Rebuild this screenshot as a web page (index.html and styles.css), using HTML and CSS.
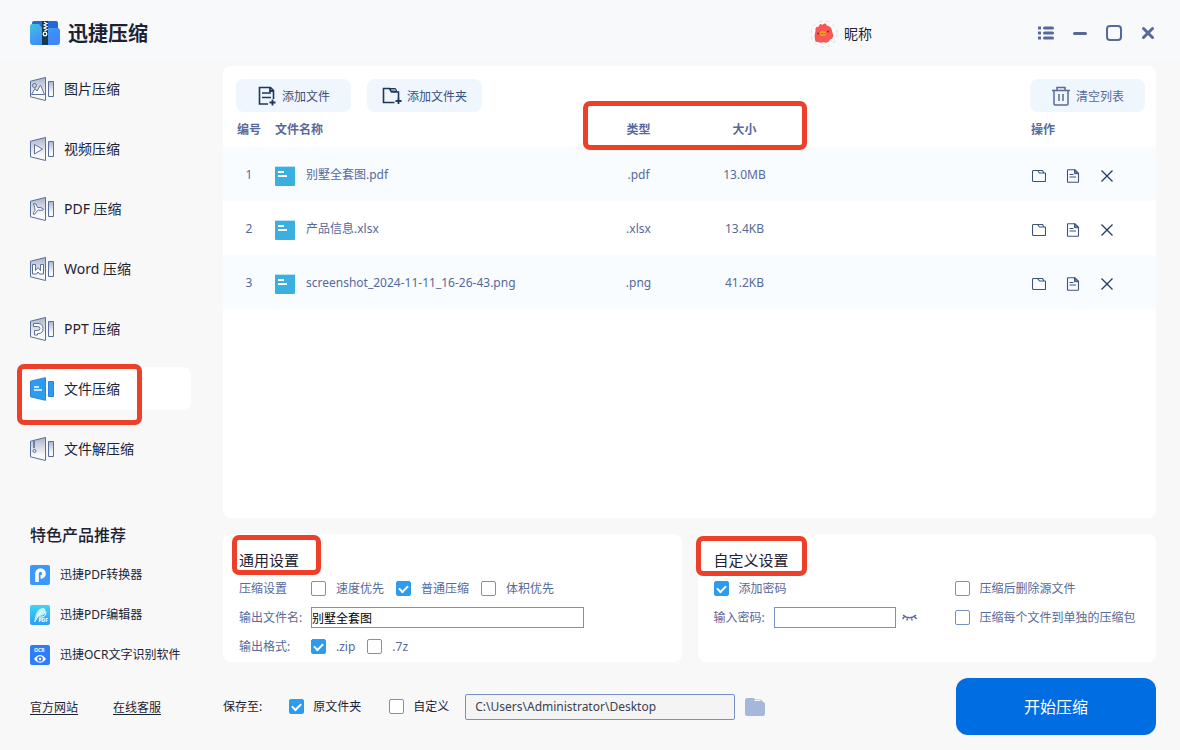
FILE: index.html
```html
<!DOCTYPE html>
<html lang="zh-CN">
<head>
<meta charset="utf-8">
<title>迅捷压缩</title>
<link rel="stylesheet" href="styles.css">
</head>
<body>
<svg class="defs" width="0" height="0" aria-hidden="true">
  <defs>
    <linearGradient id="shade" x1="0" y1="0" x2="0" y2="1"><stop offset="0" stop-color="#a9b4cb"/><stop offset="0.75" stop-color="#f8f8f8"/></linearGradient>
    <linearGradient id="folder" x1="0" y1="0" x2="1" y2="1"><stop offset="0" stop-color="#3fc3dc"/><stop offset="0.6" stop-color="#3f8df8"/><stop offset="1" stop-color="#4480ff"/></linearGradient>
    <linearGradient id="sky" x1="0" y1="0" x2="0" y2="1"><stop offset="0" stop-color="#3cd6f6"/><stop offset="1" stop-color="#2f9cf4"/></linearGradient>
    <symbol id="box" viewBox="0 0 24 24">
      <path d="M.5 4.2 15.5.5v23L.5 19.8z" fill="url(#shade)" stroke="#5a6f9e"/>
      <path d="M18.5 4.500h5v15h-5z" fill="url(#shade)" stroke="#5a6f9e"/>
    </symbol>
    <symbol id="i-open" viewBox="0 0 14 14"><path d="M1.500 1.500h4l2 2.500H13q.5 0 .5.500v7.500q0 .500-.500.500H1.500q-1 0-1-1v-9q0-1 1-1zM5.500 1.500h5l1.500 2.500" fill="none" stroke="#3f5279" stroke-width="1.100"/></symbol>
    <symbol id="i-doc" viewBox="0 0 14 14"><path d="M2 .7h7l3.500 3.500v8.600q0 .500-.500.500H2q-.500 0-.500-.500V1.200q0-.500.500-.500z" fill="none" stroke="#3f5279" stroke-width="1.100"/><path d="M8.500.7v4h4z" fill="#6d7c9b" stroke="#3f5279"/><path d="M3.500 5.500h4M3.500 8h6.500" stroke="#3f5279" stroke-width="1.100"/></symbol>
    <symbol id="i-x" viewBox="0 0 14 14"><path d="m1.500 1.500 11 11m0-11-11 11" fill="none" stroke="#243a63" stroke-width="1.300"/></symbol>
    <symbol id="i-file" viewBox="0 0 20 20"><rect width="20" height="20" rx="1" fill="#3aafe0"/><path d="M0 .5h20" stroke="#b9e2f4"/><path d="M3 6h6M3 10h9" stroke="#fff" stroke-width="2"/></symbol>
  </defs>
</svg>

<div class="app">
  <header class="titlebar">
    <svg class="logo" width="30" height="24" viewBox="0 0 30 24" aria-hidden="true">
      <path d="M2 2q0-2 2-2h22q2 0 2 2v10H2z" fill="#2368d8"/>
      <path d="M0 5q0-2 2-2h7l3 4h15q3 0 3 3v11q0 3-3 3H3q-3 0-3-3z" fill="url(#folder)"/>
      <path d="M12 0h6v24h-6z" fill="#173a48"/>
      <path d="m14 1 3 1.500-3 1.500 3 1.500-3 1.500 3 1.500-2.500 1.500" fill="none" stroke="#fff" stroke-width="1.200"/>
      <circle cx="15" cy="13" r="1.800" fill="none" stroke="#fff" stroke-width="1.300"/>
    </svg>
    <h1 class="brand">迅捷压缩</h1>
    <div class="user">
      <svg width="28" height="30" viewBox="0 0 28 30" aria-hidden="true">
        <circle cx="14" cy="15" r="12" fill="#fafafa"/>
        <circle cx="14" cy="15" r="13" fill="none" stroke="#dcdcdc" stroke-dasharray="3 4"/>
        <path d="M5.500 12q-.5-3 1-4 1-.5 2 0Q9 5.500 10.500 5q1 0 1.500 1 2-2 3.500-1.500 1 .500 1 2 4 .500 5 3.500l1 4q1.500 2 .5 4-1 2-3 2.500-1 3-3.500 3-1.500.500-2.500-.500-3 1.500-6 0-3 .500-3-2-1-4 .5-9z" fill="#fa5653"/>
        <ellipse cx="13" cy="14.500" rx="3.200" ry="2.800" fill="#f0982a"/>
        <path d="M10.500 14.500h5" stroke="#c97a1c"/>
        <circle cx="8" cy="14.500" r="1" fill="#7c2c38"/><circle cx="18" cy="12.500" r="1" fill="#7c2c38"/>
      </svg>
      <span>昵称</span>
    </div>
    <div class="window-controls">
      <button type="button" aria-label="菜单"><svg width="16" height="14" viewBox="0 0 16 14"><path d="M6.500 2h8M6.500 7h8M6.500 12h8" stroke="#57699a" stroke-width="3" stroke-linecap="round"/><path d="M0 .5h3v3H0zM0 5.500h3v3H0zM0 10.500h3v3H0z" fill="#57699a"/></svg></button>
      <button type="button" aria-label="最小化"><svg width="16" height="16" viewBox="0 0 16 16"><path d="M2.500 8.500h11" stroke="#57699a" stroke-width="3" stroke-linecap="round"/></svg></button>
      <button type="button" aria-label="最大化"><svg width="16" height="16" viewBox="0 0 16 16"><rect x="1" y="1" width="14" height="14" rx="3" fill="none" stroke="#57699a" stroke-width="2"/></svg></button>
      <button type="button" aria-label="关闭"><svg width="16" height="16" viewBox="0 0 16 16"><path d="m3.500 3.500 9 9m0-9-9 9" stroke="#57699a" stroke-width="3" stroke-linecap="round"/></svg></button>
    </div>
  </header>

  <aside class="sidebar">
    <nav class="nav">
      <a class="nav-item" href="#image"><svg width="24" height="24" aria-hidden="true"><use href="#box"/><circle cx="4.500" cy="8.500" r="2" fill="none" stroke="#5a6f9e"/><path d="M1.500 17.500 5 11.500l2 2.500 3.500-6 4 9.500z" fill="#fff" stroke="#5a6f9e"/></svg>图片压缩</a>
      <a class="nav-item" href="#video"><svg width="24" height="24" aria-hidden="true"><use href="#box"/><path d="m4.500 7.500 8 4.500-8 5z" fill="#fff" stroke="#5a6f9e"/></svg>视频压缩</a>
      <a class="nav-item" href="#pdf"><svg width="24" height="24" aria-hidden="true"><use href="#box"/><path d="M3.500 6.500q3-1 4 4 4-.5 6 1.500 0 2-5 1l-2 1.500q-1 3-3 3-1-2 1.500-4 0-3-1.500-7z" fill="#fff" stroke="#5a6f9e"/></svg>PDF 压缩</a>
      <a class="nav-item" href="#word"><svg width="24" height="24" aria-hidden="true"><use href="#box"/><path d="M2.500 7.500h3v6l2.500-3 2.500 3v-6h3v9.500h-4l-1.500-2-1.500 2h-4z" fill="#fff" stroke="#5a6f9e"/></svg>Word 压缩</a>
      <a class="nav-item" href="#ppt"><svg width="24" height="24" aria-hidden="true"><use href="#box"/><path d="M4.500 18V13.500h3q2.500 0 2.500-2t-2.500-2H3.500v-3H8q5 0 5 5t-4.500 5H7.500V18z" fill="#fff" stroke="#5a6f9e"/></svg>PPT 压缩</a>
      <a class="nav-item active marked" href="#file" aria-current="page"><svg width="24" height="24" aria-hidden="true"><path d="M.5 4.200 15.500.7v22.600L.5 19.800zM18.500 4.500h5v15h-5z" fill="#2d9bf0" stroke="#2a83dc"/><path d="M4 10h5M4 13h8" stroke="#fff" stroke-width="1.300"/></svg>文件压缩</a>
      <a class="nav-item" href="#unzip"><svg width="24" height="24" aria-hidden="true"><use href="#box"/><path d="m3 4 2 1-2 1 2 1-2 1 2 1-2 1 2 1" fill="none" stroke="#5a6f9e"/><circle cx="4.500" cy="14" r="1.500" fill="none" stroke="#5a6f9e"/></svg>文件解压缩</a>
    </nav>

    <section class="promo">
      <h2 class="promo-title">特色产品推荐</h2>
      <a class="promo-item" href="#p1"><svg width="20" height="20" viewBox="0 0 20 20" aria-hidden="true"><rect width="20" height="20" rx="2" fill="#3d98fb"/><path d="M7 17V8.500A3.500 3.500 0 1 1 10.500 12" fill="none" stroke="#fff" stroke-width="3.600"/></svg>迅捷PDF转换器</a>
      <a class="promo-item" href="#p2"><svg width="20" height="20" viewBox="0 0 20 20" aria-hidden="true"><rect width="20" height="20" rx="2" fill="url(#sky)"/><path d="M4 17 6 9q3-7 8-6 4 4-1 7L7 12z" fill="#c9f1fc"/><path d="m4.500 17 7-11M9 12h4q3-1 3-5" fill="none" stroke="#fff"/><text x="8.500" y="17" class="tiny">PDF</text></svg>迅捷PDF编辑器</a>
      <a class="promo-item" href="#p3"><svg width="20" height="20" viewBox="0 0 20 20" aria-hidden="true"><rect width="20" height="20" rx="2" fill="#2f7df6"/><text x="4" y="7" class="tiny">OCR</text><path d="M4 14q6-8 12 0-6 7.500-12 0z" fill="#fff"/><circle cx="10" cy="14" r="2.800" fill="#2f7df6"/><circle cx="10" cy="14" r="1.200" fill="#fff"/></svg>迅捷OCR文字识别软件</a>
    </section>
    <div class="links"><a href="#site">官方网站</a><a href="#service">在线客服</a></div>
  </aside>

  <main class="main">
    <section class="panel files">
      <div class="toolbar">
        <button type="button" class="tool"><svg width="20" height="20" viewBox="0 0 20 20" aria-hidden="true"><path d="M11 18H2.500V1.500h11l3 3V13M5 7h9M5 11.500h9" fill="none" stroke="#1f365f" stroke-width="1.600"/><path d="M13 1.500v3.500h3.500M15.500 13.500v6M12.500 16.500h6" fill="none" stroke="#1f365f" stroke-width="1.800"/></svg><span>添加文件</span></button>
        <button type="button" class="tool"><svg width="20" height="20" viewBox="0 0 20 20" aria-hidden="true"><path d="M12.500 16.500h-11V2.500h6l2 3.500h7v6.500" fill="none" stroke="#1f365f" stroke-width="1.600"/><path d="M8 2.500h5.500l1.500 3H9.500z" fill="#8d9bb4" stroke="#1f365f"/><path d="M16.500 12v6M13.500 15h6" stroke="#1f365f" stroke-width="1.800"/></svg><span>添加文件夹</span></button>
        <button type="button" class="tool clear"><svg width="20" height="20" viewBox="0 0 20 20" aria-hidden="true"><path d="M1 4.500h18M6 4V1.500h8V4M3 4.500V18q0 1 1 1h12q1 0 1-1V4.500M8 8v7M12 8v7" fill="none" stroke="#57699a" stroke-width="1.500"/></svg><span>清空列表</span></button>
      </div>
      <table class="list">
        <colgroup><col class="c-no"><col class="c-name"><col class="c-type"><col class="c-size"><col><col class="c-act"></colgroup>
        <thead><tr><th class="mid">编号</th><th>文件名称</th><th class="mid marked">类型</th><th class="mid">大小</th><th></th><th>操作</th></tr></thead>
        <tbody>
          <tr><td class="mid">1</td><td><div class="file"><svg width="20" height="20"><use href="#i-file"/></svg><span>别墅全套图.pdf</span></div></td><td class="mid">.pdf</td><td class="mid">13.0MB</td><td></td><td><div class="actions"><button type="button" aria-label="打开文件夹"><svg width="14" height="14"><use href="#i-open"/></svg></button><button type="button" aria-label="查看文件"><svg width="14" height="14"><use href="#i-doc"/></svg></button><button type="button" aria-label="移除"><svg width="14" height="14"><use href="#i-x"/></svg></button></div></td></tr>
          <tr><td class="mid">2</td><td><div class="file"><svg width="20" height="20"><use href="#i-file"/></svg><span>产品信息.xlsx</span></div></td><td class="mid">.xlsx</td><td class="mid">13.4KB</td><td></td><td><div class="actions"><button type="button" aria-label="打开文件夹"><svg width="14" height="14"><use href="#i-open"/></svg></button><button type="button" aria-label="查看文件"><svg width="14" height="14"><use href="#i-doc"/></svg></button><button type="button" aria-label="移除"><svg width="14" height="14"><use href="#i-x"/></svg></button></div></td></tr>
          <tr><td class="mid">3</td><td><div class="file"><svg width="20" height="20"><use href="#i-file"/></svg><span>screenshot_2024-11-11_16-26-43.png</span></div></td><td class="mid">.png</td><td class="mid">41.2KB</td><td></td><td><div class="actions"><button type="button" aria-label="打开文件夹"><svg width="14" height="14"><use href="#i-open"/></svg></button><button type="button" aria-label="查看文件"><svg width="14" height="14"><use href="#i-doc"/></svg></button><button type="button" aria-label="移除"><svg width="14" height="14"><use href="#i-x"/></svg></button></div></td></tr>
        </tbody>
      </table>
    </section>

    <div class="settings">
      <section class="panel group general">
        <h2 class="group-title">通用设置</h2>
        <div class="row"><span class="field">压缩设置</span>
          <label class="check"><input type="checkbox">速度优先</label>
          <label class="check"><input type="checkbox" checked>普通压缩</label>
          <label class="check"><input type="checkbox">体积优先</label></div>
        <div class="row"><label class="field" for="outname">输出文件名:</label><input class="text name" id="outname" type="text" value="别墅全套图"></div>
        <div class="row"><span class="field">输出格式:</span>
          <label class="check"><input type="checkbox" checked>.zip</label>
          <label class="check"><input type="checkbox">.7z</label></div>
      </section>
      <section class="panel group custom">
        <h2 class="group-title">自定义设置</h2>
        <div class="row split"><label class="check"><input type="checkbox" checked>添加密码</label><label class="check"><input type="checkbox">压缩后删除源文件</label></div>
        <div class="row split">
          <div class="password"><label for="pwd">输入密码:</label><input class="text" id="pwd" type="password"><button type="button" aria-label="显示密码"><svg width="15" height="10" viewBox="0 0 15 10"><path d="M1 2q6.500 5.500 13 0M2.500 3.500.5 6M12.500 3.500l2 2.500M5.500 4.500 5 7.500M9.500 4.500l.5 3" fill="none" stroke="#57699a" stroke-width="1.500"/></svg></button></div>
          <label class="check"><input type="checkbox">压缩每个文件到单独的压缩包</label></div>
      </section>
    </div>

    <footer class="save">
      <span class="save-label">保存至:</span>
      <label class="check"><input type="checkbox" checked>原文件夹</label>
      <label class="check"><input type="checkbox">自定义</label>
      <input class="text path" type="text" aria-label="保存路径" value="C:\Users\Administrator\Desktop">
      <button type="button" class="browse" aria-label="浏览"><svg width="20" height="18" viewBox="0 0 20 18"><path d="M0 2q0-2 2-2h7l1 1.500h6L18 4q2 0 2 2v9.500Q20 18 18 18H2q-2 0-2-2z" fill="#a6b8da"/><path d="M9.500 2.500h6" stroke="#f8f8f8"/></svg></button>
      <button type="button" class="start">开始压缩</button>
    </footer>
  </main>
</div>
</body>
</html>
```
FILE: styles.css
```css
*, *::before, *::after { box-sizing: border-box; }

body {
  margin: 0;
  background: #f8f8f8;
  color: #1d2233;
  font: 12px/18px "Noto Sans", "Noto Sans CJK SC", sans-serif;
}

h1, h2 { margin: 0; }
a { color: inherit; text-decoration: none; }
svg { display: block; flex: none; }
button, input { font: inherit; color: inherit; }
button { padding: 0; border: 0; background: none; cursor: pointer; }
.defs { position: absolute; }
.tiny { font: bold 5px "Noto Sans", sans-serif; fill: #fff; }

.app {
  display: grid;
  grid-template: 66px 1fr / 223px 1fr;
  min-height: 100vh;
}

/* Title bar */
.titlebar {
  grid-column: 1 / -1;
  display: flex;
  align-items: center;
  padding: 0 24px 0 30px;
  background: linear-gradient(#f7f9fb 60px, #f8f8f8 60px);
}
.brand { margin-left: 8px; padding-top: 2px; font-size: 20px; line-height: 28px; font-weight: 700; }
.user { display: flex; align-items: center; gap: 6px; margin-left: auto; padding-top: 2px; font-size: 14px; }
.window-controls { display: flex; gap: 18px; margin-left: 166px; }
.window-controls button { display: grid; place-items: center; width: 16px; height: 16px; }

/* Sidebar */
.sidebar { display: flex; flex-direction: column; padding: 1px 32px 33px 18px; }
.nav { display: flex; flex-direction: column; gap: 17px; }
.nav-item {
  display: flex;
  align-items: center;
  gap: 10px;
  height: 43px;
  padding-left: 12px;
  border-radius: 8px;
  font-size: 14px;
}
.nav-item.active { background: #fff; }
.promo { margin-top: auto; padding-left: 12px; }
.promo-title { margin-bottom: 20px; font-size: 16px; line-height: 20px; font-weight: 500; }
.promo-item { display: flex; align-items: center; gap: 10px; height: 20px; margin-bottom: 20px; white-space: nowrap; }
.links { display: flex; gap: 35px; padding: 14px 0 0 12px; }
.links a { text-decoration: underline; text-underline-offset: 2px; }

/* Main column */
.main { display: flex; flex-direction: column; gap: 16px; padding: 0 24px 15px 0; }
.panel { background: #fff; border-radius: 8px; }
.files { flex: 1; color: #57699a; }

.toolbar { display: flex; gap: 16px; padding: 13px 11px 0 13px; }
.tool {
  display: flex;
  align-items: center;
  justify-content: center;
  gap: 5px;
  width: 115px;
  height: 33px;
  border-radius: 8px;
  background: #eff6fd;
  color: #3b4f7a;
}
.tool span { padding-top: 2px; }
.tool.clear { margin-left: auto; color: #57699a; }

.list { width: 100%; table-layout: fixed; border-collapse: collapse; }
.list th { height: 35px; padding: 0; text-align: left; font-weight: 700; }
.list td { height: 54px; padding: 2px 0 0; }
.list .mid { text-align: center; }
.list tbody tr:nth-child(odd) { background: #f8fcff; }
.c-no { width: 52px; }
.c-name { width: 310px; }
.c-type { width: 107px; }
.c-size { width: 105px; }
.c-act { width: 125px; }
.file { display: flex; align-items: center; gap: 11px; }
.file svg { margin-top: 2px; }
.actions { display: flex; gap: 20px; padding: 2px 0 0 1px; }

/* Settings */
.settings { display: grid; grid-template-columns: 1fr 1fr; gap: 16px; color: #57699a; }
.group { position: relative; display: flex; flex-direction: column; gap: 8px; padding: 16px 16px 5px; }
.group-title { font-size: 15px; line-height: 20px; font-weight: 400; color: #1d2233; }
.row { display: flex; align-items: center; gap: 12px; height: 21px; white-space: nowrap; }
.field { width: 60px; }
.row.split { display: grid; grid-template-columns: 241px 1fr; gap: 0; }
.check { display: flex; align-items: center; gap: 10px; }
.check input {
  appearance: none;
  display: grid;
  place-items: center;
  width: 15px;
  height: 15px;
  margin: 0;
  border: 1px solid #7890c2;
  border-radius: 2px;
  background: #fff;
}
.check input:checked { border-color: #2d9bf0; background: #2d9bf0; }
.check input:checked::before {
  content: "";
  width: 9px;
  height: 6px;
  border: solid #fff;
  border-width: 0 0 2px 2px;
  transform: translateY(-1px) rotate(-45deg);
}
.text { height: 21px; padding: 0; border: 1px solid #7890c2; background: #fff; color: #000; }
.text.name { flex: 0 1 273px; min-width: 0; }
.password { display: flex; align-items: center; gap: 9px; }
.password .text { width: 122px; }
.password button { margin-left: -3px; }

/* Save bar */
.save { display: flex; align-items: center; height: 57px; }
.save-label { margin-right: 27px; }
.save .check { gap: 9px; margin-right: 28px; }
.save .check + .check { margin-right: 16px; }
.save .text.path { width: 270px; height: 26px; padding: 0 9px; border-radius: 2px; background: #f4f4f4; color: #3b4152; }
.browse { margin-left: 10px; }
.start {
  align-self: stretch;
  width: 200px;
  margin-left: auto;
  border-radius: 12px;
  background: #006de2;
  color: #fff;
  font-size: 16px;
}

/* Red highlight frames */
.marked { position: relative; }
.marked::after,
.group::after {
  content: "";
  position: absolute;
  border: 5px solid #ee4028;
  border-radius: 7px;
  pointer-events: none;
}
.nav-item.marked::after { left: -1px; top: -3px; width: 125px; height: 61px; }
th.marked::after { left: -2px; top: -11px; width: 224px; height: 49px; }
.general::after { left: 9px; top: 1px; width: 89px; height: 40px; }
.custom::after { left: -2px; top: 2px; width: 111px; height: 40px; }
```
